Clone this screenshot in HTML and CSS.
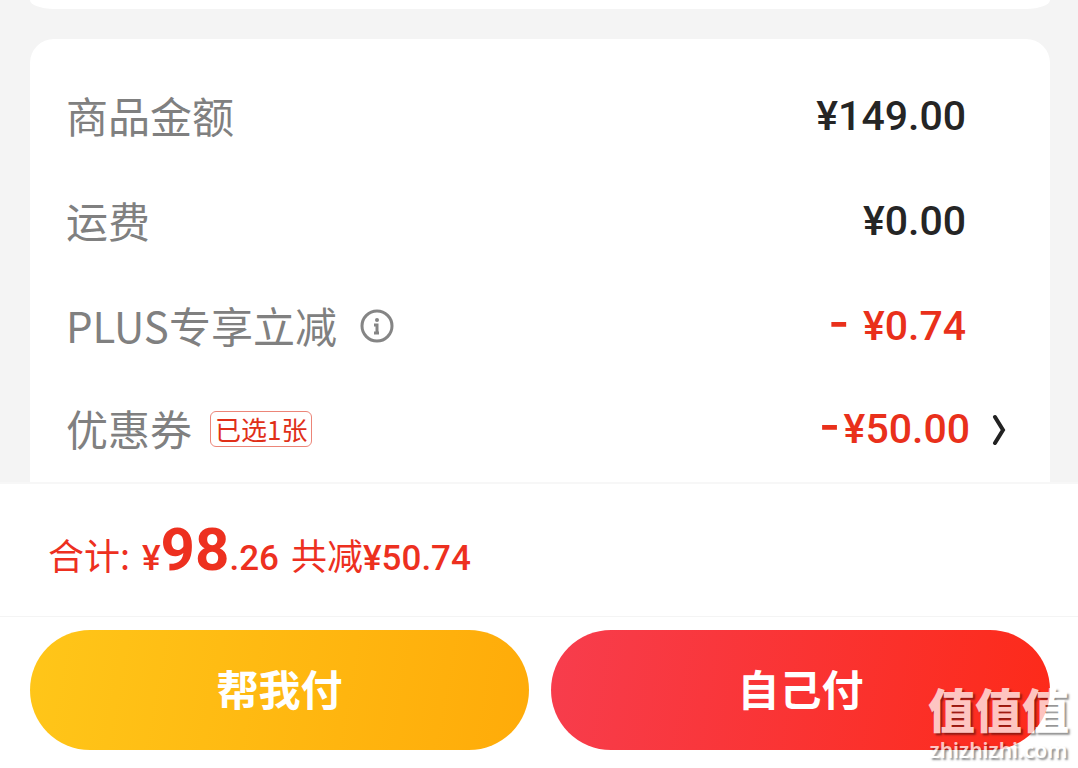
FILE: index.html
```html
<!DOCTYPE html>
<html lang="zh-CN">
<head>
    <meta charset="UTF-8">
    <meta name="viewport" content="width=device-width, initial-scale=1.0">
    <title>确认订单</title>
    <link rel="stylesheet" href="styles.css">
</head>
<body>
    <main class="page">
        <!-- End of the previous card -->
        <div class="card card-previous"></div>

        <!-- Price details -->
        <section class="card price-card">
            <div class="row">
                <span class="label">商品金额</span>
                <span class="amount">¥149.00</span>
            </div>
            <div class="row">
                <span class="label">运费</span>
                <span class="amount">¥0.00</span>
            </div>
            <div class="row">
                <span class="label">PLUS专享立减</span>
                <button class="icon-button info" aria-label="说明">
                    <svg width="36" height="36" viewBox="0 0 36 36" fill="none" stroke="#858585">
                        <circle cx="18" cy="18" r="15" stroke-width="3"/>
                        <circle cx="18" cy="12" r="2" fill="#858585" stroke="none"/>
                        <path d="M15 17h3v8M15 25h5" stroke-width="3"/>
                    </svg>
                </button>
                <span class="amount discount"><span class="minus">-</span> ¥0.74</span>
            </div>
            <div class="row">
                <span class="label">优惠券</span>
                <span class="tag">已选1张</span>
                <span class="amount discount"><span class="minus">-</span>¥50.00</span>
                <button class="icon-button arrow" aria-label="选择优惠券">
                    <svg width="16" height="32" viewBox="0 0 16 32" fill="none" stroke="#222">
                        <path d="M3 4L11 17L3 30" stroke-width="4" stroke-linecap="round"/>
                    </svg>
                </button>
            </div>
        </section>

        <!-- Total -->
        <section class="total">
            <span class="total-label">合计:</span>
            <span class="price">¥<span class="price-main">98</span>.26</span>
            <span class="saved">共减<span class="saved-amount">¥50.74</span></span>
        </section>

        <!-- Pay buttons -->
        <footer class="actions">
            <button class="pay-button pay-friend">帮我付</button>
            <button class="pay-button pay-self">自己付</button>
        </footer>

        <div class="watermark">
            <span class="watermark-name">值值值</span>
            <span class="watermark-site">zhizhizhi.com</span>
        </div>
    </main>
</body>
</html>
```
FILE: styles.css
```css
/* Global Styles */
* {
    box-sizing: border-box;
}

body {
    margin: 0;
    background: #f4f4f4;
    color: #252525;
    font-family: "Noto Sans CJK SC", sans-serif;
}

button {
    border: none;
    padding: 0;
    background: none;
    font-family: inherit;
    cursor: pointer;
}

.page {
    position: relative;
    overflow: hidden;
}

/* Cards */
.card {
    margin: 0 28px 0 30px;
    background: #fff;
}

.card-previous {
    height: 9px;
    margin-bottom: 30px;
    border-radius: 0 0 24px 24px / 0 0 9px 9px;
}

.price-card {
    padding: 24px 36px 2px;
    border-radius: 24px 24px 0 0;
}

.row {
    display: flex;
    align-items: center;
    height: 105px;
    padding-right: 48px;
}

.row:last-child {
    height: 102px;
    padding-right: 6px;
}

.label {
    padding-bottom: 2px;
    color: #808080;
    font-size: 42px;
    line-height: 60px;
}

.amount {
    margin-left: auto;
    font-family: Roboto, "Noto Sans CJK SC", sans-serif;
    font-size: 41px;
    font-weight: 500;
    line-height: 48px;
}

.discount {
    color: #e9301b;
}

.minus {
    margin-right: 4px;
    font-family: "Noto Sans CJK SC", sans-serif;
    font-size: 56px;
    line-height: 0;
}

.icon-button {
    display: flex;
}

.info {
    margin-left: 22px;
}

.arrow {
    margin-left: 22px;
}

.tag {
    margin-left: 18px;
    padding: 0 4px;
    border: 1px solid #ec8578;
    border-radius: 6px;
    color: #e02f18;
    font-size: 26px;
    line-height: 34px;
}

/* Total */
.total {
    display: flex;
    align-items: baseline;
    height: 134px;
    padding: 30px 48px 0;
    border-top: 2px solid #f7f7f7;
    background: #fff;
    color: #ed301f;
    font-size: 36px;
}

.price,
.saved-amount {
    font-family: Roboto, "Noto Sans CJK SC", sans-serif;
    font-size: 35px;
    font-weight: 500;
}

.price {
    margin-left: 12px;
}

.price-main {
    font-size: 60px;
    font-weight: 700;
}

.saved {
    margin-left: 12px;
}

/* Pay Buttons */
.actions {
    display: flex;
    gap: 22px;
    padding: 13px 28px 18px 30px;
    border-top: 1px solid #f4f4f4;
    background: #fff;
}

.pay-button {
    flex: 1;
    height: 120px;
    padding-bottom: 6px;
    border-radius: 60px;
    color: #fff;
    font-size: 42px;
    font-weight: 700;
}

.pay-friend {
    background: linear-gradient(100deg, #ffc619, #ffab09);
}

.pay-self {
    background: linear-gradient(100deg, #f73d4d, #fd2a19);
}

/* Watermark over the corner */
.watermark {
    position: absolute;
    right: 9px;
    bottom: 6px;
    display: flex;
    flex-direction: column;
    gap: 4px;
    align-items: center;
    color: #fff;
    text-shadow: 2px 2px 2px rgba(0, 0, 0, 0.6);
    opacity: 0.72;
    pointer-events: none;
}

.watermark-name {
    font-size: 47px;
    font-weight: 900;
    line-height: 52px;
}

.watermark-site {
    font-family: "Noto Sans", sans-serif;
    font-size: 21px;
    font-weight: 600;
    line-height: 24px;
}
```
